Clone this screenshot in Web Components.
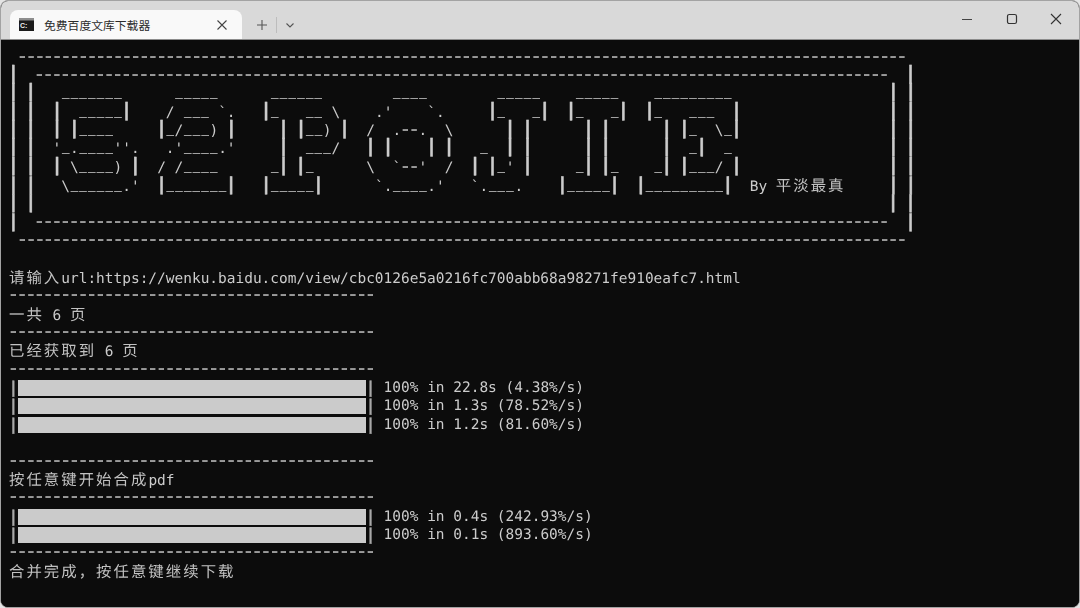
<!DOCTYPE html>
<html>
<head>
<meta charset="utf-8">
<title>免费百度文库下载器</title>
<style>
  html, body { margin: 0; background: #e4e4e4; }
</style>
</head>
<body>
<term-window>
  <term-tab slot="tabs">免费百度文库下载器</term-tab>
  <term-screen></term-screen>
</term-window>

<script>
// Window frame: title bar with tabs and caption buttons, content below
class TermWindow extends HTMLElement {
  constructor() {
    super();
    this.attachShadow({ mode: 'open' });
    this.shadowRoot.innerHTML = `
      <style>
        :host { display: flex; flex-direction: column; width: 1080px; height: 608px; box-sizing: border-box;
          border: 1px solid #a3a3a3; border-radius: 8px; overflow: hidden; background: #0c0c0c; }
        .bar { display: flex; align-items: flex-end; flex: none; height: 38px; background: #d9d9d9; border-bottom: 1px solid #8c8c8c; padding-left: 9px; }
        .new { display: flex; align-items: center; height: 28px; color: #555; }
        .new svg { display: block; }
        .plus { margin-left: 13px; }
        .sep { width: 1px; height: 16px; background: #bdbdbd; margin: 0 7px 0 7px; }
        .caps { display: flex; margin-left: auto; align-self: stretch; align-items: center; padding: 0 0.5px 2px 0; }
        .caps span { display: flex; width: 44.5px; justify-content: center; }
        .caps svg { display: block; }
      </style>
      <div class="bar">
        <slot name="tabs"></slot>
        <div class="new">
          <svg class="plus" width="14" height="14" viewBox="0 0 14 14"><path d="M7 2v10M2 7h10" stroke="#555" stroke-width="1.1" fill="none"/></svg>
          <div class="sep"></div>
          <svg width="12" height="12" viewBox="0 0 12 12"><path d="M2.5 4.5 6 8l3.5-3.5" stroke="#555" stroke-width="1.1" fill="none"/></svg>
        </div>
        <div class="caps">
          <span><svg width="12" height="12" viewBox="0 0 12 12"><path d="M1 6.5h10" stroke="#444" stroke-width="1.2"/></svg></span>
          <span><svg width="12" height="12" viewBox="0 0 12 12"><rect x="1.5" y="1.5" width="9" height="9" rx="1.8" stroke="#333" stroke-width="1.2" fill="none"/></svg></span>
          <span><svg width="12" height="12" viewBox="0 0 12 12"><path d="M1 1l10 10M11 1 1 11" stroke="#333" stroke-width="1.1" fill="none"/></svg></span>
        </div>
      </div>
      <slot></slot>
    `;
  }
}

// Single tab with the console icon, title from the slot and a close cross
class TermTab extends HTMLElement {
  constructor() {
    super();
    this.attachShadow({ mode: 'open' });
    this.shadowRoot.innerHTML = `
      <style>
        :host { display: flex; align-items: center; box-sizing: border-box; width: 232px; height: 29px; background: #f9f9f9;
          border-radius: 8px 8px 0 0; padding: 0 14px 0 9px; color: #2b2b2b;
          font: 11.8px/16px "Noto Sans CJK SC", "Noto Sans", sans-serif; }
        svg { display: block; flex: none; }
        .title { margin-left: 10px; flex: 1; white-space: nowrap; }
      </style>
      <svg width="15" height="13" viewBox="0 0 15 13">
        <rect width="15" height="13" fill="#1a1a1a"/>
        <rect x="0" y="0" width="15" height="2.5" fill="#8d8d8d"/>
        <text x="1" y="10" font-size="7" font-weight="700" font-family="Liberation Sans, sans-serif" fill="#f0f0f0">C:\</text>
      </svg>
      <span class="title"><slot></slot></span>
      <svg width="12" height="12" viewBox="0 0 12 12"><path d="M1.5 1.5l9 9M10.5 1.5l-9 9" stroke="#444" stroke-width="1.1" fill="none"/></svg>
    `;
  }
}

// One row of the console. Hyphens, underscores and bars are resized so they
// look like the terminal font, with letter-spacing keeping them on the cell grid
const CELL = 8.71;

class TermLine extends HTMLElement {
  constructor() {
    super();
    this.attachShadow({ mode: 'open' });
  }

  connectedCallback() {
    const text = this.getAttribute('text') || '';
    const html = text
      .replace(/&/g, '&amp;').replace(/</g, '&lt;')
      .replace(/[\u3400-\u9fff\uff00-\uffef]+/g, m => `<span class="c">${m}</span>`)
      .replace(/█+/g, m => `<span class="k">${m}</span>`)
      .replace(/-+/g, m => `<b style="width:${(m.length * CELL).toFixed(2)}px"><span class="h">${m}</span></b>`)
      .replace(/_+/g, m => `<span class="u">${m}</span>`)
      .replace(/\|/g, '<i>|</i>');
    this.shadowRoot.innerHTML = `<style>
        :host { display: block; height: 18.37px; line-height: 18.37px; white-space: pre; will-change: transform; }
        .c { font-size: 15.4px; letter-spacing: 2.03px; color: #c2c2c2; }
        .k { display: inline-block; vertical-align: top; height: 16px; line-height: 16px; margin-top: 1.4px; overflow: hidden; background: #cbcbcb; color: #cbcbcb; }
        b { display: inline-block; font-weight: 400; }
        .h { display: inline-block; letter-spacing: -2.26px; transform-origin: 0 50%; transform: translate(-1.53px, -1px) scaleX(1.35); -webkit-text-stroke: 0.2px #cccccc; }
        .u { font-size: 12.3px; letter-spacing: 1.31px; line-height: 0; position: relative; top: -2.4px; left: 0.65px; -webkit-text-stroke: 0.2px #cccccc; }
        i { display: inline-block; vertical-align: top; width: 8.72px; height: 18.37px; line-height: 18.37px; font-style: normal; font-weight: 700;
            font-size: 18.45px; letter-spacing: -2.39px; transform: translate(-1.2px, -1.7px); -webkit-text-stroke: 0.5px #cccccc; }
        :host(.low) i { transform: translate(-1px, -0.6px); font-size: 17.8px; letter-spacing: -2px; }
        :host(.bar) i { font-size: 16px; letter-spacing: -0.91px; color: #a8a8a8; transform: translate(-0.45px, 0); -webkit-text-stroke: 0.3px #a8a8a8; }
      </style>${html}`;
  }
}

// Console content: banner is given as [column, text] pieces per row
const H = n => '-'.repeat(n);
const U = n => '_'.repeat(n);
const BANNER = [
  [[1, H(102)]],
  [[0, '|'], [3, H(98)], [103, '|']],
  [[0, '|'], [2, '|'], [6, U(7)], [19, U(5)], [30, U(6)], [44, U(4)], [56, U(5)], [65, U(5)], [74, U(9)], [101, '|'], [103, '|']],
  [[0, '|'], [2, '|'], [5, '|'], [8, U(5)], [13, '|'], [18, '/'], [20, U(3)], [24, '`.'], [29, '|_'], [34, U(2)], [37, '\\'],
    [42, ".'"], [48, '`.'], [55, '|_'], [60, '_|'], [64, '|_'], [69, '_|'], [73, '|_'], [78, U(3)], [83, '|'], [101, '|'], [103, '|']],
  [[0, '|'], [2, '|'], [5, '|'], [7, '|'], [8, U(4)], [17, '|_/'], [20, U(3)], [23, ')'], [25, '|'], [31, '|'], [33, '|'], [34, U(2)], [36, ')'], [38, '|'],
    [41, '/'], [44, '.'], [45, '--'], [47, '.'], [50, '\\'], [57, '|'], [59, '|'], [66, '|'], [68, '|'], [75, '|'], [77, '|_'], [81, '\\_|'], [101, '|'], [103, '|']],
  [[0, '|'], [2, '|'], [5, "'_."], [8, U(4)], [12, "''."], [18, ".'"], [20, U(4)], [24, ".'"], [31, '|'], [34, U(3)], [37, '/'],
    [41, '|'], [43, '|'], [48, '|'], [50, '|'], [54, '_'], [57, '|'], [59, '|'], [66, '|'], [68, '|'], [75, '|'], [78, '_|'], [82, '_'], [101, '|'], [103, '|']],
  [[0, '|'], [2, '|'], [5, '|'], [7, '\\'], [8, U(4)], [12, ')'], [14, '|'], [17, '/'], [19, '/'], [20, U(4)], [30, '_|'], [33, '|_'],
    [41, '\\'], [44, '`'], [45, '--'], [47, "'"], [50, '/'], [53, '|'], [55, '|_'], [57, "'"], [59, '|'], [65, '_|'], [68, '|_'], [74, '_|'], [77, '|'], [78, U(3)], [81, '/'], [83, '|'], [101, '|'], [103, '|']],
  [[0, '|'], [2, '|'], [6, '\\'], [7, U(6)], [13, ".'"], [17, '|'], [18, U(7)], [25, '|'], [29, '|'], [30, U(5)], [35, '|'],
    [42, '`.'], [44, U(4)], [48, ".'"], [53, '`.'], [55, U(3)], [58, '.'], [63, '|'], [64, U(5)], [69, '|'], [72, '|'], [73, U(9)], [82, '|'], [85, 'By 平淡最真'], [101, '|'], [103, '|']],
  [[0, '|'], [2, '|'], [101, '|'], [103, '|']],
  [[0, '|'], [3, H(98)], [103, '|']],
  [[1, H(102)]],
];

const cellLen = s => [...s].reduce((n, ch) => n + (ch.charCodeAt(0) > 0x2e7f ? 2 : 1), 0);

function placeRow(pieces) {
  let row = '';
  let len = 0;
  for (const [col, text] of pieces) {
    row += ' '.repeat(Math.max(0, col - len)) + text;
    len = Math.max(len, col) + cellLen(text);
  }
  return row;
}

const SEP = H(42);
const BLOCKS = '█'.repeat(40);

class TermScreen extends HTMLElement {
  constructor() {
    super();
    this.attachShadow({ mode: 'open' });
    const rows = BANNER.map((p, i) => ({ text: placeRow(p), cls: i >= 7 && i <= 9 ? 'low' : '' }));
    const log = [
      '',
      '请输入url:https://wenku.baidu.com/view/cbc0126e5a0216fc700abb68a98271fe910eafc7.html',
      SEP, '一共 6 页',
      SEP, '已经获取到 6 页',
      SEP,
      { bar: '100% in 22.8s (4.38%/s)' },
      { bar: '100% in 1.3s (78.52%/s)' },
      { bar: '100% in 1.2s (81.60%/s)' },
      '',
      SEP, '按任意键开始合成pdf',
      SEP,
      { bar: '100% in 0.4s (242.93%/s)' },
      { bar: '100% in 0.1s (893.60%/s)' },
      SEP, '合并完成，按任意键继续下载',
    ];
    for (const item of log) {
      if (item.bar) rows.push({ text: `|${BLOCKS}| ${item.bar}`, cls: 'bar' });
      else rows.push({ text: item, cls: '' });
    }
    this.shadowRoot.innerHTML = `<style>
        :host { display: block; flex: 1; background: #0c0c0c; color: #cccccc; padding: 8.6px 0 0 8px;
          font: 14.48px/18.37px "DejaVu Sans Mono", "Noto Sans CJK SC", monospace; text-rendering: geometricPrecision; }
      </style>`;
    for (const r of rows) {
      const line = document.createElement('term-line');
      line.setAttribute('text', r.text);
      if (r.cls) line.className = r.cls;
      this.shadowRoot.appendChild(line);
    }
  }
}

customElements.define('term-line', TermLine);
customElements.define('term-tab', TermTab);
customElements.define('term-screen', TermScreen);
customElements.define('term-window', TermWindow);
</script>
</body>
</html>
